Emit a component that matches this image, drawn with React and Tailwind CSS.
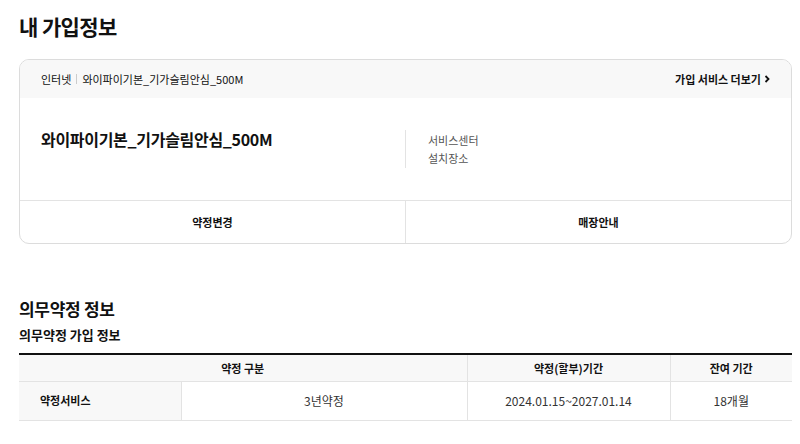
import React from 'react';

function App() {
  return (
    <div className="min-h-screen bg-white text-[#111] px-[19px] pt-[10px]" style={{ fontFamily: '"Noto Sans CJK KR", "Noto Sans", sans-serif' }}>
      <h1 className="text-[21px] font-bold leading-[32px] tracking-[-0.6px]">내 가입정보</h1>

      <div className="mt-[17px] w-[773px] border border-[#dcdcdc] rounded-[10px] overflow-hidden">
        <div className="h-[38px] bg-[#f8f8f8] flex items-center justify-between pl-[21px] pr-[21px] text-[11px]">
          <div className="flex items-center">
            <span>인터넷</span>
            <span className="mx-[5px] w-px h-[10px] bg-[#ccc]"></span>
            <span>와이파이기본_기가슬림안심_500M</span>
          </div>
          <div className="flex items-center font-bold">
            <span>가입 서비스 더보기</span>
            <svg className="ml-[3px]" width="6" height="8" viewBox="0 0 6 8">
              <path d="M1.5 1 L4.5 4 L1.5 7" fill="none" stroke="#111" strokeWidth="1.8" />
            </svg>
          </div>
        </div>

        <div className="h-[102px] flex">
          <div className="w-[385px] pl-[21px] pt-[29px] text-[16px] font-bold tracking-[-0.3px]">
            와이파이기본_기가슬림안심_500M
          </div>
          <div className="mt-[32px] h-[38px] border-l border-[#e3e3e3] pl-[22px] text-[11px] text-[#555] leading-[18px] pt-[1px]">
            <div>서비스센터</div>
            <div>설치장소</div>
          </div>
        </div>

        <div className="h-[43px] border-t border-[#e3e3e3] grid grid-cols-[385px_1fr] text-[11px] font-bold">
          <div className="flex items-center justify-center">약정변경</div>
          <div className="flex items-center justify-center border-l border-[#e3e3e3]">매장안내</div>
        </div>
      </div>

      <h2 className="mt-[52px] text-[17px] font-bold leading-[26px] tracking-[-0.3px]">의무약정 정보</h2>
      <h3 className="mt-[3px] text-[13px] font-bold leading-[20px]">의무약정 가입 정보</h3>

      <table className="mt-[8px] w-[773px] border-t-2 border-[#111] border-collapse text-[11px]">
        <thead>
          <tr className="h-[27px] bg-[#f8f8f8]">
            <th colSpan={2} className="font-bold border-b border-[#e3e3e3]">약정 구분</th>
            <th className="w-[203px] font-bold border-l border-b border-[#e3e3e3]">약정(할부)기간</th>
            <th className="w-[122px] font-bold border-l border-b border-[#e3e3e3]">잔여 기간</th>
          </tr>
        </thead>
        <tbody>
          <tr className="h-[39px] border-b border-[#e3e3e3]">
            <td className="w-[162px] bg-[#f8f8f8] pl-[21px] font-bold text-left border-r border-[#e3e3e3]">약정서비스</td>
            <td className="text-center text-[12px] text-[#333]">3년약정</td>
            <td className="text-center text-[12px] text-[#333] border-l border-[#e3e3e3]">2024.01.15~2027.01.14</td>
            <td className="text-center text-[12px] text-[#333] border-l border-[#e3e3e3]">18개월</td>
          </tr>
        </tbody>
      </table>
    </div>
  );
}

export default App;
